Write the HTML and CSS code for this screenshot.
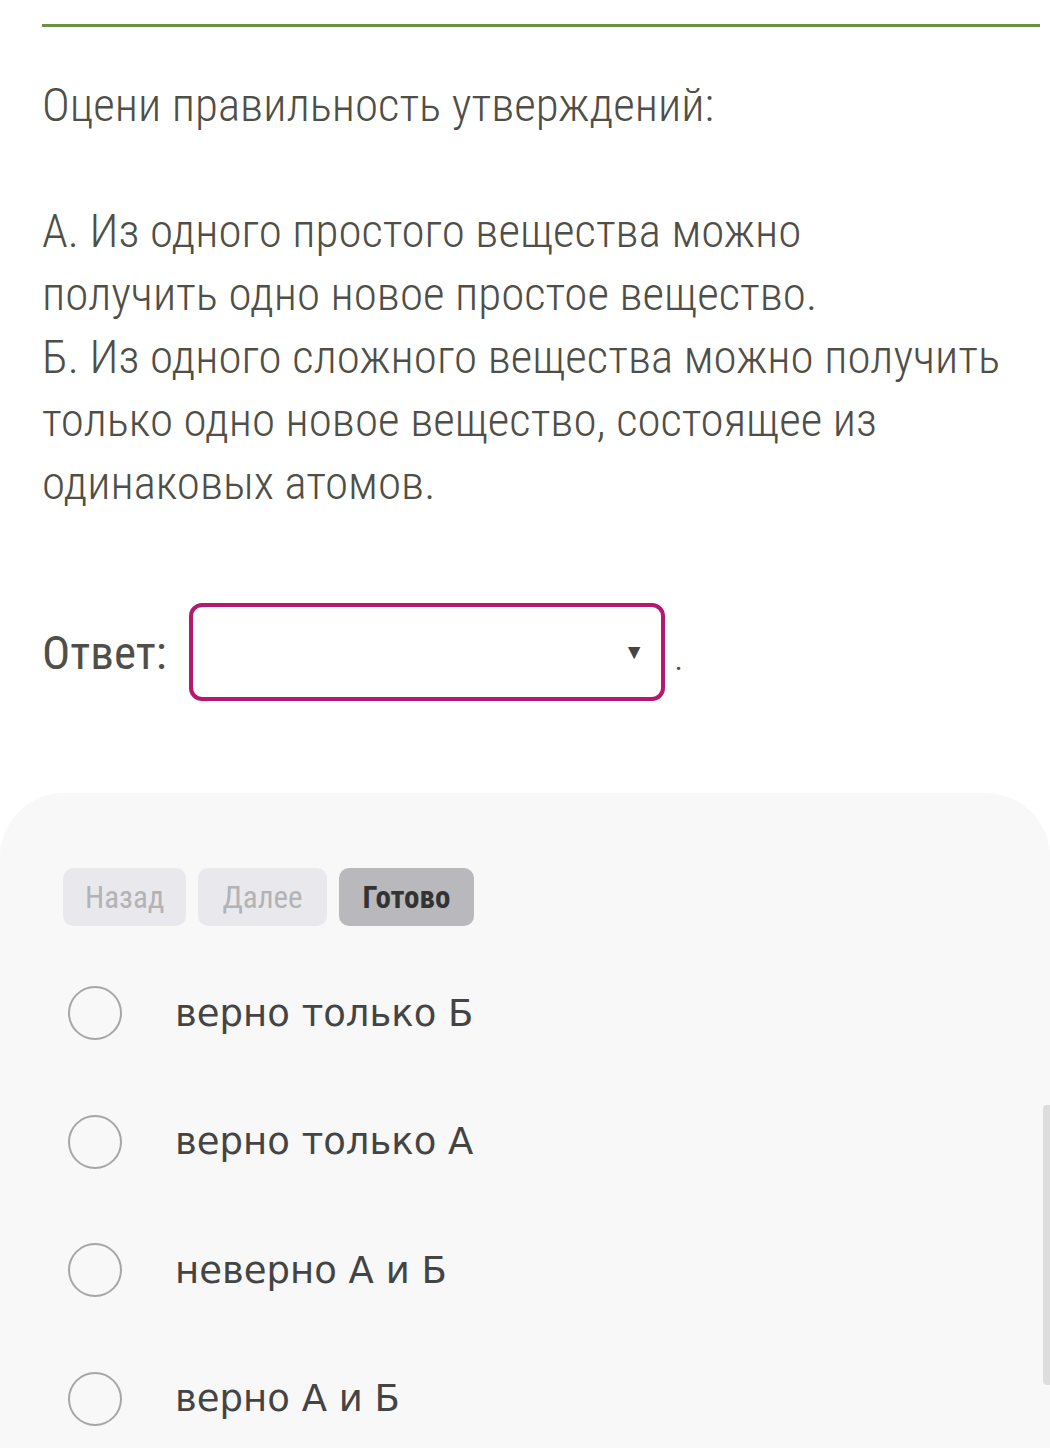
FILE: index.html
```html
<!doctype html>
<html lang="ru">
<head>
    <meta charset="UTF-8">
    <title>Тест</title>
    <link rel="stylesheet" href="styles.css">
</head>
<body>
<div class="top-line"></div>
<div class="question">
    <p class="text">Оцени правильность утверждений:<br><br>А. Из одного простого вещества можно<br>получить одно новое простое вещество.<br>Б. Из одного сложного вещества можно получить<br>только одно новое вещество, состоящее из<br>одинаковых атомов.</p>
    <div class="answer">
        <span class="answer-label">Ответ:</span>
        <div class="select"><span class="arrow">▼</span></div>
        <span class="dot">.</span>
    </div>
</div>
<div class="panel">
    <div class="buttons">
        <div class="btn">Назад</div>
        <div class="btn">Далее</div>
        <div class="btn active">Готово</div>
    </div>
    <div class="options">
        <div class="option"><div class="radio"></div><span>верно только Б</span></div>
        <div class="option"><div class="radio"></div><span>верно только А</span></div>
        <div class="option"><div class="radio"></div><span>неверно А и Б</span></div>
        <div class="option"><div class="radio"></div><span>верно А и Б</span></div>
    </div>
    <div class="scrollbar"></div>
</div>
</body>
</html>
```

FILE: styles.css
```css
body {
    margin: 0;
    background-color: #fff;
    font-family: "Roboto Condensed", "Liberation Sans Narrow", Roboto, sans-serif;
    color: #4f4f47;
    overflow: hidden;
    height: 1448px;
}
.top-line {
    margin: 24px 10px 0 42px;
    height: 3px;
    background-color: #6a9140;
}
.question {
    padding: 0 20px 0 42px;
}
.text {
    margin: 46px 0 0;
    font-size: 47px;
    font-weight: 300;
    line-height: 63px;
    white-space: nowrap;
}
.answer {
    display: flex;
    align-items: center;
    margin-top: 89px;
}
.answer-label {
    font-size: 47px;
    font-weight: 400;
    margin-right: 22px;
}
.select {
    width: 468px;
    height: 90px;
    border: 4px solid #b5196f;
    border-radius: 13px;
    display: flex;
    align-items: center;
    justify-content: flex-end;
}
.arrow {
    font-size: 21px;
    color: #444;
    margin-right: 16px;
}
.dot {
    font-size: 30px;
    margin-left: 10px;
    margin-top: 14px;
}
.panel {
    position: relative;
    box-sizing: border-box;
    margin-top: 92px;
    background-color: #f8f8f8;
    border-radius: 64px 64px 0 0;
    padding: 75px 0 0 63px;
    height: 656px;
    overflow: hidden;
}
.buttons {
    display: flex;
    gap: 12px;
}
.btn {
    height: 58px;
    padding: 0 22px;
    display: flex;
    align-items: center;
    border-radius: 10px;
    background-color: #e9e9ed;
    color: #b3b3b6;
    font-family: "Liberation Sans Narrow", "Roboto Condensed", sans-serif;
    font-size: 31px;
}
.btn + .btn {
    padding: 0 24px;
}
.btn.active {
    background-color: #b8b8bd;
    color: #333;
    font-weight: bold;
}
.options {
    margin-top: 23px;
}
.option {
    display: flex;
    align-items: center;
    height: 128.5px;
}
.radio {
    width: 54px;
    height: 54px;
    border: 2px solid #a6a6a6;
    border-radius: 50%;
    margin: 0 53px 0 5px;
    box-sizing: border-box;
}
.option span {
    font-family: "Comic Sans MS", "DejaVu Sans", sans-serif;
    font-size: 37px;
    color: #444;
}
.scrollbar {
    position: absolute;
    right: 0;
    top: 312px;
    width: 7px;
    height: 280px;
    background-color: #ddd;
    border-radius: 4px 0 0 4px;
}
```
